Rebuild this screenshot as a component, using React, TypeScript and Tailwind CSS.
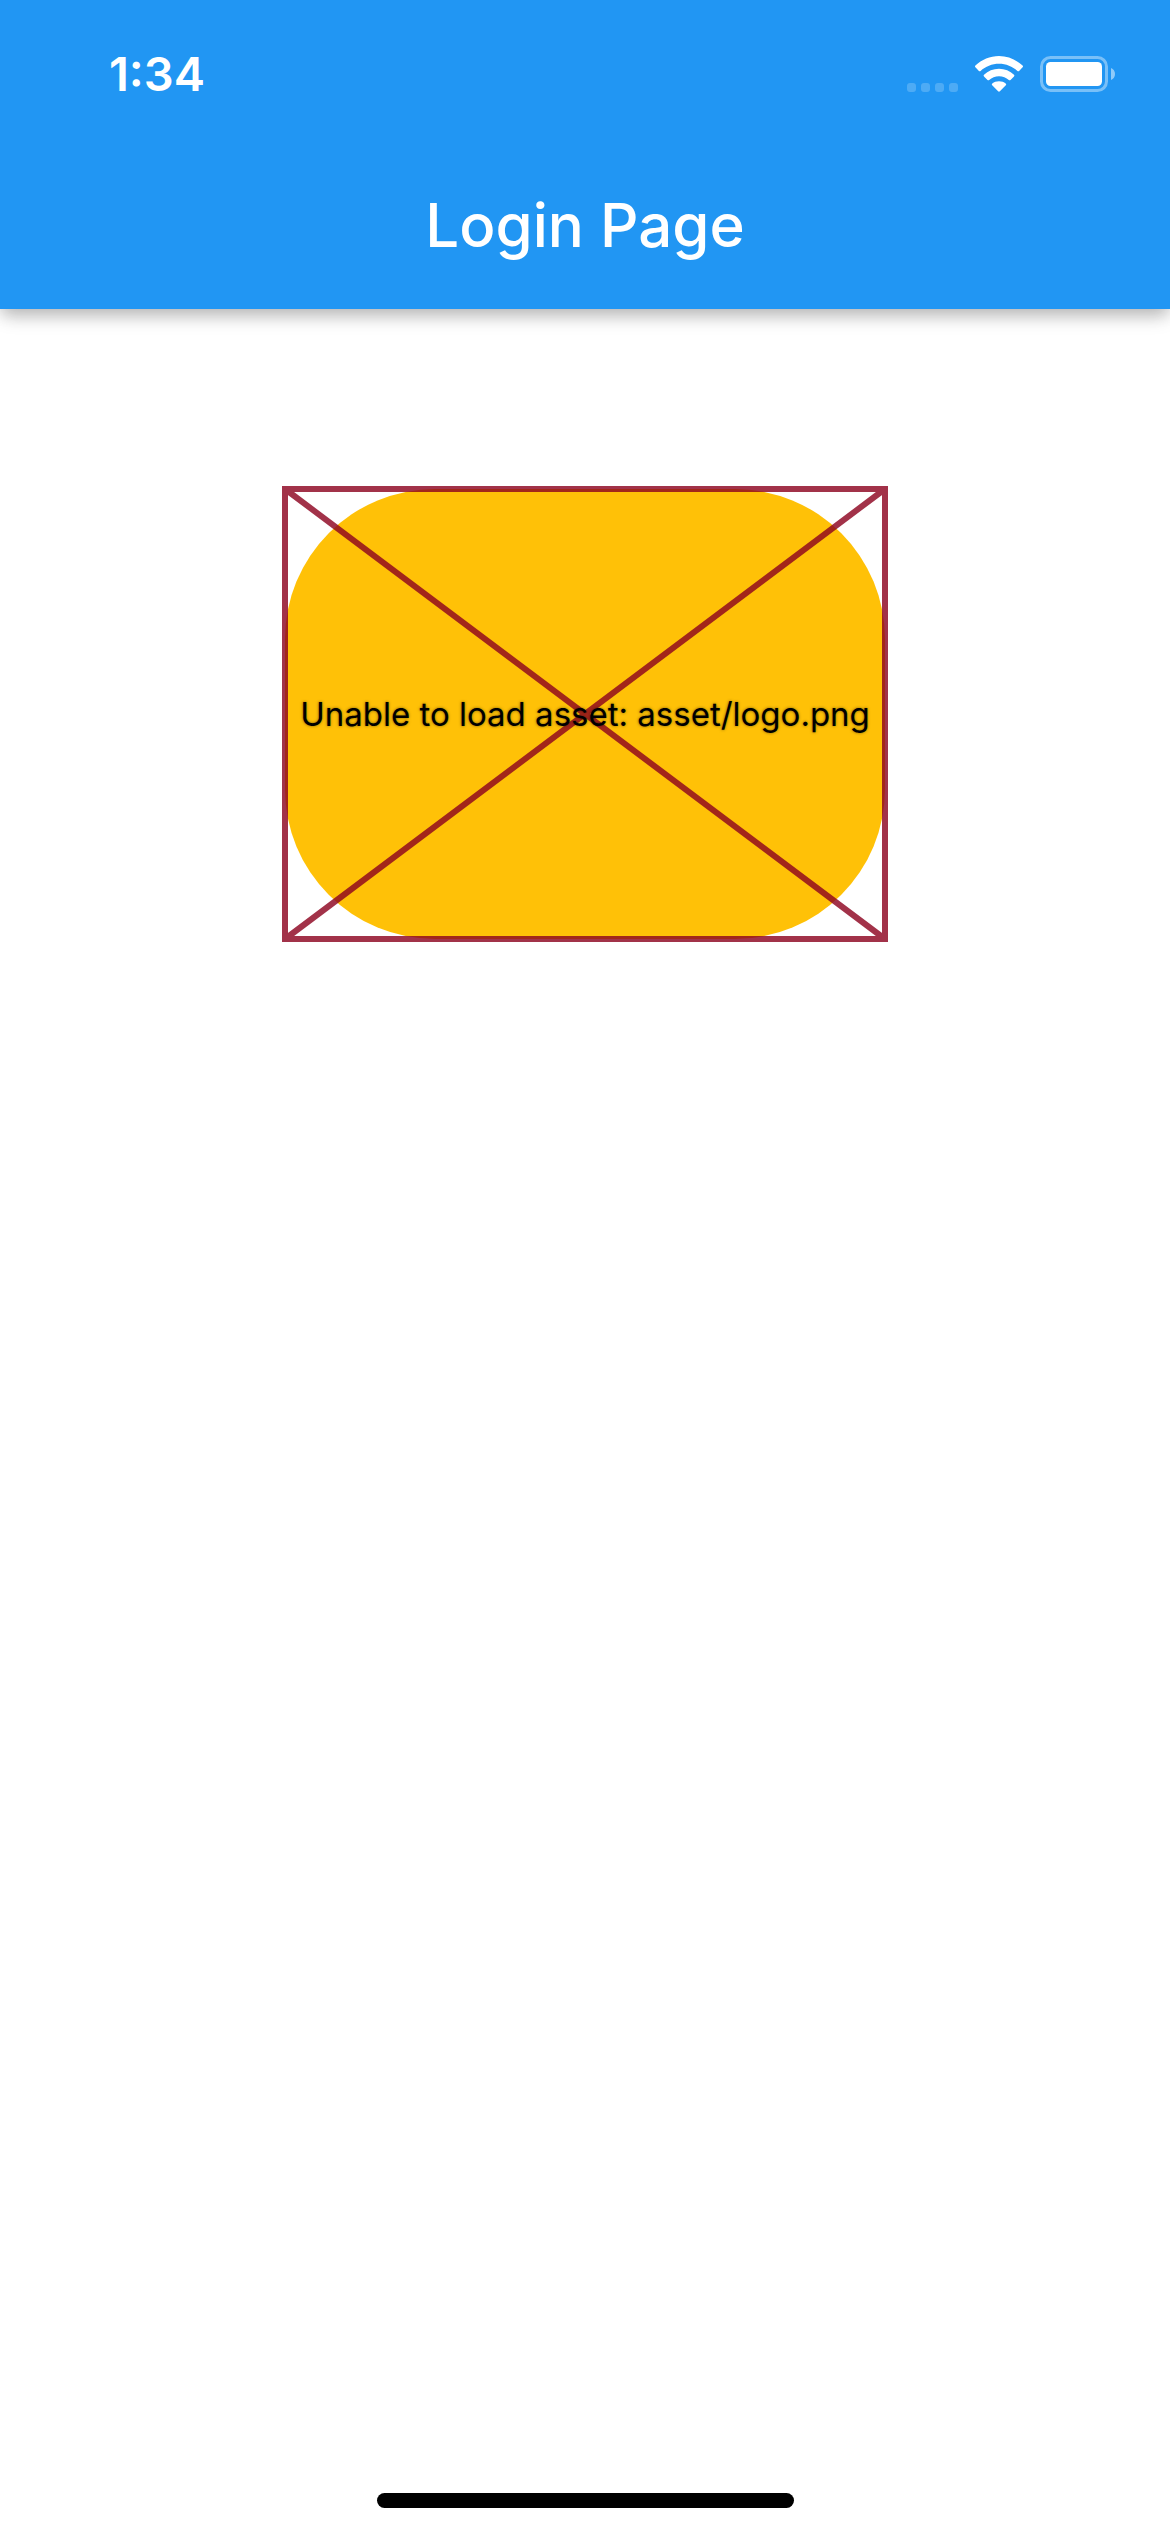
function CellularDots() {
  return (
    <svg className="h-9 w-[51px]" viewBox="0 0 51 36" fill="#fff" fillOpacity="0.2" aria-hidden="true">
      {[0, 14, 28, 42].map((x) => (
        <rect key={x} x={x} y="27" width="9" height="9" rx="3" />
      ))}
    </svg>
  );
}

function WifiIcon() {
  return (
    <svg className="h-9 w-12" viewBox="0 0 48 36" fill="#fff" aria-hidden="true">
      <path d="M24 0C33 0 41.300 3.700 47.600 9.600Q48.400 10.400 47.600 11.300L44.100 14.900Q43.300 15.700 42.400 14.900C37.500 10.400 31 7.700 24 7.700S10.500 10.400 5.600 14.900Q4.700 15.700 3.900 14.900L.4 11.300Q-.4 10.400.4 9.600C6.700 3.700 15 0 24 0Z" />
      <path d="M24 12.800C29.800 12.800 35 15 39 18.700Q39.900 19.500 39 20.400L35.500 23.900Q34.700 24.700 33.800 24C31.200 21.700 27.800 20.300 24 20.300S16.800 21.700 14.200 24Q13.300 24.700 12.500 23.900L9 20.400Q8.100 19.500 9 18.700C13 15 18.200 12.800 24 12.800Z" />
      <path d="M24 25.200C26.700 25.200 29 26 30.700 27.600Q31.600 28.400 30.800 29.300L24.900 35.200Q24 36.100 23.100 35.200L17.200 29.300Q16.400 28.400 17.300 27.600C19 26 21.300 25.200 24 25.200Z" />
    </svg>
  );
}

function BatteryIcon() {
  return (
    <svg className="h-9 w-[75px]" viewBox="0 0 75 36" fill="none" aria-hidden="true">
      <rect x="1.500" y="1.500" width="65" height="33" rx="9" stroke="#fff" strokeOpacity="0.4" strokeWidth="3" />
      <rect x="6" y="6" width="56" height="24" rx="4.500" fill="#fff" />
      <path d="M71 12C73.500 13 75 15.200 75 18S73.500 23 71 24Z" fill="#fff" fillOpacity="0.5" />
    </svg>
  );
}

function StatusBar() {
  return (
    <div className="flex h-[141px] items-start justify-between pt-14 pr-[55px] pl-[109px]">
      <span className="text-[47px] leading-9 font-semibold">1:34</span>
      <div className="flex gap-[17px]">
        <CellularDots />
        <WifiIcon />
        <BatteryIcon />
      </div>
    </div>
  );
}

function MissingImage({ message }: { message: string }) {
  return (
    <div className="relative flex h-[450px] w-[600px] items-center justify-center rounded-[150px] bg-[#ffc107]">
      <svg
        className="absolute inset-0 h-full w-full overflow-visible"
        viewBox="0 0 600 450"
        fill="none"
        aria-hidden="true"
      >
        <path
          d="M0 0H600V450H0ZM0 0L600 450M600 0L0 450"
          stroke="#8d021f"
          strokeOpacity="0.81"
          strokeWidth="6"
        />
      </svg>
      <p className="relative text-[33px] leading-10 whitespace-nowrap text-black [text-shadow:0_0_3px_rgba(0,0,0,0.5)]">
        {message}
      </p>
    </div>
  );
}

export default function App() {
  return (
    <div className="flex min-h-screen flex-col bg-white font-['Inter',sans-serif]">
      <header className="bg-[#2196f3] text-white shadow-[0_10px_18px_-3px_rgba(0,0,0,0.2),0_4px_15px_rgba(0,0,0,0.14)]">
        <StatusBar />
        <h1 className="flex h-[168px] items-center justify-center text-[60px] font-medium">Login Page</h1>
      </header>
      <main className="flex flex-1 flex-col items-center pt-[180px]">
        <MissingImage message="Unable to load asset: asset/logo.png" />
      </main>
      <footer className="flex justify-center pb-6">
        <div className="h-[15px] w-[417px] rounded-full bg-black" />
      </footer>
    </div>
  );
}
